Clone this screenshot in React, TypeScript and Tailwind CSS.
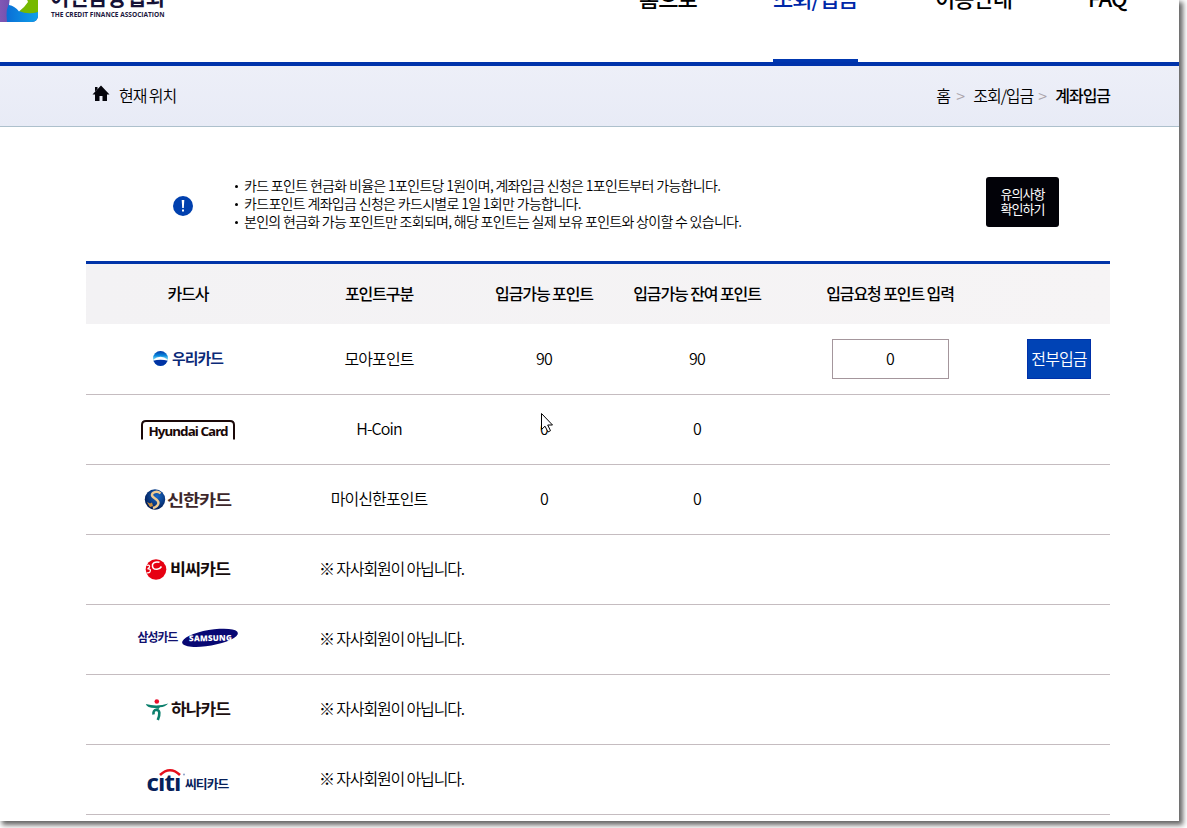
import type { ReactNode } from "react";

const logoFont = '"Noto Sans CJK KR", sans-serif';

const LogoText = ({
  x,
  y,
  size,
  width,
  fill,
  children,
}: {
  x: number;
  y: number;
  size: number;
  width: number;
  fill: string;
  children: string;
}) => (
  <text
    x={x}
    y={y}
    fontSize={size}
    fontFamily={logoFont}
    fontWeight={700}
    textLength={width}
    lengthAdjust="spacingAndGlyphs"
    fill={fill}
  >
    {children}
  </text>
);

const LogoFrame = ({ label, children }: { label: string; children: ReactNode }) => (
  <svg width="110" height="30" viewBox="0 0 110 30" role="img" aria-label={label} className="relative -top-px mx-auto block">
    {children}
  </svg>
);

// every card logo shares the same 110x30 box
const WooriLogo = () => (
  <LogoFrame label="우리카드">
    <defs>
      <linearGradient id="woori" x1="0" y1="0" x2="0" y2="1">
        <stop offset="0" stopColor="#0038a8" />
        <stop offset="0.3" stopColor="#0a86dc" />
        <stop offset="0.55" stopColor="#7ddcf5" />
      </linearGradient>
      <clipPath id="wooriClip">
        <circle cx="27.5" cy="14.5" r="7.5" />
      </clipPath>
    </defs>
    <g clipPath="url(#wooriClip)">
      <rect x="20" y="7" width="15" height="15" fill="url(#woori)" />
      <path d="M19 17 Q27.5 8.500 36 17 V19 H19Z" fill="#fff" />
      <path d="M19 17 Q27.500 14.500 36 17 V23 H19Z" fill="#0033a4" />
    </g>
    <LogoText x={39} y={20} size={15} width={51} fill="#0b2a78">우리카드</LogoText>
  </LogoFrame>
);

const HyundaiLogo = () => (
  <LogoFrame label="Hyundai Card">
    <path d="M9 25.500 V11 Q9 7 13 7 H97 Q101 7 101 11 V25.500" fill="none" stroke="#1a0808" strokeWidth="2" />
    <text x="15.500" y="22" fontSize="13" fontFamily='"Noto Sans", sans-serif' fontWeight={700} textLength="79" lengthAdjust="spacingAndGlyphs" fill="#1a0808">
      Hyundai Card
    </text>
  </LogoFrame>
);

const ShinhanLogo = () => (
  <LogoFrame label="신한카드">
    <defs>
      <radialGradient id="shinhan" cx="0.6" cy="0.35" r="0.7">
        <stop offset="0" stopColor="#1769c8" />
        <stop offset="1" stopColor="#00174f" />
      </radialGradient>
    </defs>
    <circle cx="22" cy="15.500" r="10.200" fill="url(#shinhan)" />
    <path
      d="M27.500 9.500 C24 6 18.500 8.500 19 11.500 C20 14.500 25.500 15 25.500 19 C25 22 22 23.500 20 24"
      fill="none"
      stroke="#efcb92"
      strokeWidth="2.400"
    />
    <path d="M14 18 L17 19.500 L19 18.500 L20 22 L17 23Z" fill="#c98d3c" />
    <LogoText x={34} y={21.5} size={16} width={64} fill="#3d272b">신한카드</LogoText>
  </LogoFrame>
);

const BcLogo = () => (
  <LogoFrame label="비씨카드">
    <circle cx="23" cy="15.500" r="10.300" fill="#e60012" />
    <path
      d="M13.500 11.500 Q17 10.500 16.500 13 Q16 14.300 14.500 14.800 Q18.500 14.500 17 17.800 Q16 19.300 13.500 18.800"
      fill="none"
      stroke="#fff"
      strokeWidth="1.300"
    />
    <path d="M26.500 8.200 Q21 7 19.500 10.500 Q18.800 15.500 24 15.300 Q27 15 28.500 12.500" fill="none" stroke="#fff" strokeWidth="1.500" />
    <LogoText x={37} y={21} size={16} width={60} fill="#160b0b">비씨카드</LogoText>
  </LogoFrame>
);

const SamsungLogo = () => (
  <LogoFrame label="삼성카드">
    <LogoText x={4.5} y={18} size={12.5} width={40} fill="#11116f">삼성카드</LogoText>
    <ellipse cx="77" cy="13.800" rx="28.300" ry="7.800" transform="rotate(-10 77 13.800)" fill="#080873" />
    <text x="56" y="17" fontSize="8" fontFamily='"Open Sans", sans-serif' fontWeight={800} textLength="42" lengthAdjust="spacing" transform="rotate(-1 77 13)" fill="#fff">
      SAMSUNG
    </text>
  </LogoFrame>
);

const HanaLogo = () => (
  <LogoFrame label="하나카드">
    <circle cx="23.800" cy="7.500" r="2.300" fill="#e90f2c" />
    <path d="M12.800 10 Q24 13 35.300 9.500 Q32 13 27 13.300 L25.500 15 L22 14 Q14 14 12.800 10Z" fill="#0b7f6c" />
    <path d="M20.500 20.500 Q20 16 23.500 15.800 Q28.500 16.500 24.800 26" fill="none" stroke="#0b7f6c" strokeWidth="2.600" />
    <LogoText x={38} y={21} size={16} width={59} fill="#1d0f0f">하나카드</LogoText>
  </LogoFrame>
);

const CitiLogo = () => (
  <LogoFrame label="씨티카드">
    <text x="13.500" y="26.500" fontSize="24" fontFamily='"Open Sans", sans-serif' fontWeight={700} textLength="34" lengthAdjust="spacingAndGlyphs" fill="#06215a">
      cıtı
    </text>
    <path d="M27 11 Q37 1.500 47 11" fill="none" stroke="#e60f1c" strokeWidth="2.600" />
    <circle cx="51" cy="10.500" r="1" fill="#8aa0c8" />
    <LogoText x={52} y={24.5} size={12.5} width={43.5} fill="#06215a">씨티카드</LogoText>
  </LogoFrame>
);

const notices = [
  { text: "카드 포인트 현금화 비율은 1포인트당 1원이며, 계좌입금 신청은 1포인트부터 가능합니다.", width: 477 },
  { text: "카드포인트 계좌입금 신청은 카드시별로 1일 1회만 가능합니다.", width: 337.5 },
  { text: "본인의 현금화 가능 포인트만 조회되며, 해당 포인트는 실제 보유 포인트와 상이할 수 있습니다.", width: 498 },
];

const members = [
  { logo: <WooriLogo />, type: "모아포인트", available: 90, remaining: 90, requested: 0 },
  { logo: <HyundaiLogo />, type: "H-Coin", available: 0, remaining: 0 },
  { logo: <ShinhanLogo />, type: "마이신한포인트", available: 0, remaining: 0 },
];

const nonMembers = [<BcLogo />, <SamsungLogo />, <HanaLogo />, <CitiLogo />];

const Header = () => (
  <header className="relative h-[66px] border-b-4 border-[#0033ab]">
    <svg width="180" height="24" viewBox="0 0 180 24" className="absolute left-0 top-0">
      <defs>
        <linearGradient id="cfaLeft" x1="0" y1="0" x2="1" y2="0">
          <stop offset="0" stopColor="#8a5cb8" />
          <stop offset="1" stopColor="#4a3a9c" />
        </linearGradient>
        <linearGradient id="cfaBlue" x1="0" y1="0" x2="1" y2="0">
          <stop offset="0" stopColor="#0a6fd6" />
          <stop offset="1" stopColor="#10a0ea" />
        </linearGradient>
        <clipPath id="cfaClip">
          <rect x="-6" y="-20" width="44" height="42" rx="6" />
        </clipPath>
      </defs>
      <g clipPath="url(#cfaClip)">
        <rect x="-6" y="-20" width="44" height="42" fill="url(#cfaLeft)" />
        <path d="M7 22 Q5 8 11 0 L20 11 Q27 14 38 12 V22Z" fill="url(#cfaBlue)" />
        <path d="M26 -4 H38 V12 Q28 15 19 11 Q27 6 26 -4Z" fill="#76b900" />
        <path d="M10 -3 H26 L28 2 Q24 8 19 11.500 Q15 6 9 5Z" fill="#fff" />
      </g>
      <LogoText x={50} y={4.5} size={22} width={115} fill="#151236">여신금융협회</LogoText>
      <text x="51" y="16.800" fontSize="7.300" fontFamily='"Open Sans", sans-serif' fontWeight={700} textLength="113.500" lengthAdjust="spacingAndGlyphs" fill="#1b1740">
        THE CREDIT FINANCE ASSOCIATION
      </text>
    </svg>
    <nav className="ml-[639px] flex h-[62px] text-[22px] font-medium tracking-[-1px]">
      <a className="-mt-[19px] w-[134px] leading-8">홈으로</a>
      <div className="flex w-[162px] flex-col justify-between">
        <a className="-mt-[19px] leading-8 text-[#0028a8]">조회/입금</a>
        <span className="h-[3px] w-[85px] bg-[#0037b0]" />
      </div>
      <a className="-mt-[19px] w-[153px] leading-8">이용안내</a>
      <a className="-mt-[19px] leading-8">FAQ</a>
    </nav>
  </header>
);

const LocationBar = () => (
  <div className="flex h-[61px] items-center justify-between border-b border-[#adc0cc] bg-linear-to-b from-[#edeff8] to-[#e8ebf6] pb-0.5 pl-[92px] pr-[69px] text-[16px] font-[350] tracking-[-1.05px]">
    <div className="flex items-center gap-[9px]">
      <svg width="18" height="17" viewBox="0 0 18 17" className="mb-1">
        <path d="M0.500 9.500 L9 0.500 L17.500 9.500 H15 V16 H10.500 V11 H7.500 V16 H3 V9.500Z M3 2 H5.500 V4 L3 6.500Z" fill="#05050c" />
      </svg>
      <span>현재 위치</span>
    </div>
    <div className="flex items-center">
      <span className="w-5">홈</span>
      <span className="w-[17px] text-[#aaa3aa]">&gt;</span>
      <span className="w-[65px]">조회/입금</span>
      <span className="w-[17px] text-[#aaa3aa]">&gt;</span>
      <span className="font-medium">계좌입금</span>
    </div>
  </div>
);

const Notice = () => (
  <section className="flex h-[134px] pt-[50px]">
    <div className="ml-[173px] mt-[19px] flex size-5 items-center justify-center rounded-full bg-[#0040ae]">
      <svg width="4" height="12" viewBox="0 0 4 12">
        <path d="M0.700 0 H3.300 L2.800 8 H1.200Z M1 9.500 H3 V11.500 H1Z" fill="#fff" />
      </svg>
    </div>
    <ul className="ml-[42px] w-[751px] text-[14px] font-[350] leading-[18px]">
      {notices.map((notice) => (
        <li key={notice.text} className="flex h-[18px] items-center">
          <span className="mr-1.5 size-[3px] rounded-full bg-black" />
          <svg width={notice.width + 4} height="18" className="block">
            <text x="0" y="13.500" textLength={notice.width} fontSize="14">{notice.text}</text>
          </svg>
        </li>
      ))}
    </ul>
    <button className="h-[50px] w-[73px] rounded-[3px] bg-[#020208] pb-0.5 text-[13px] leading-[15px] tracking-[-1px] text-white">
      유의사항
      <br />
      확인하기
    </button>
  </section>
);

const PointTable = () => (
  <table className="ml-[86px] w-[1024px] table-fixed border-collapse text-center text-[16px] font-[350] tracking-[-0.9px]">
    <colgroup>
      <col className="w-[204px]" />
      <col className="w-[178px]" />
      <col className="w-[152px]" />
      <col className="w-[154px]" />
      <col className="w-[232px]" />
      <col className="w-[104px]" />
    </colgroup>
    <thead>
      <tr className="h-[62px] border-b border-b-white border-t-3 border-t-[#0033a8] bg-linear-to-r from-[#f3f2f4] to-[#f6f4f5] tracking-[-1.1px]">
        <th className="pb-0.5 font-medium">카드사</th>
        <th className="pb-0.5 font-medium">포인트구분</th>
        <th className="pb-0.5 font-medium">입금가능 포인트</th>
        <th className="pb-0.5 font-medium">입금가능 잔여 포인트</th>
        <th className="pb-0.5 font-medium">입금요청 포인트 입력</th>
        <th />
      </tr>
    </thead>
    <tbody>
      {members.map((row) => (
        <tr key={row.type} className="h-[70px] border-b border-[#c5bcc0]">
          <td>{row.logo}</td>
          <td className="pb-1">{row.type}</td>
          <td className="pb-1">{row.available}</td>
          <td className="pb-1">{row.remaining}</td>
          <td className="pb-0.5">
            {row.requested !== undefined && (
              <input
                className="mx-auto block h-10 w-[117px] border border-[#a4969c] pb-0.5 text-center"
                defaultValue={row.requested}
              />
            )}
          </td>
          <td className="pb-0.5">
            {row.requested !== undefined && (
              <button className="ml-[21px] block h-10 w-16 border border-[#0030a8] bg-[#0043b5] pb-0.5 text-white">전부입금</button>
            )}
          </td>
        </tr>
      ))}
      {nonMembers.map((logo, index) => (
        <tr key={index} className="h-[70px] border-b border-[#c5bcc0]">
          <td>{logo}</td>
          <td colSpan={5} className="pb-1 pl-[29px] text-left tracking-[-1.15px]">※ 자사회원이 아닙니다.</td>
        </tr>
      ))}
    </tbody>
  </table>
);

const App = () => {
  return (
    <div className="h-[828px] w-[1187px] overflow-hidden bg-white font-['Noto_Sans_CJK_KR',sans-serif] text-black">
      <div className="relative h-[821px] w-[1179px] bg-white shadow-[3px_3px_5px_1px_#666]">
        <Header />
        <LocationBar />
        <Notice />
        <PointTable />
        <svg width="14" height="22" viewBox="0 0 14 22" className="absolute left-[540px] top-[412px]">
          <path d="M1.500 1.500 V17.500 L5 14.200 L8 20 L10.500 18.700 L7.700 13 H12.500Z" fill="#fff" stroke="#000" strokeWidth="1" />
        </svg>
      </div>
    </div>
  );
};

export default App;
